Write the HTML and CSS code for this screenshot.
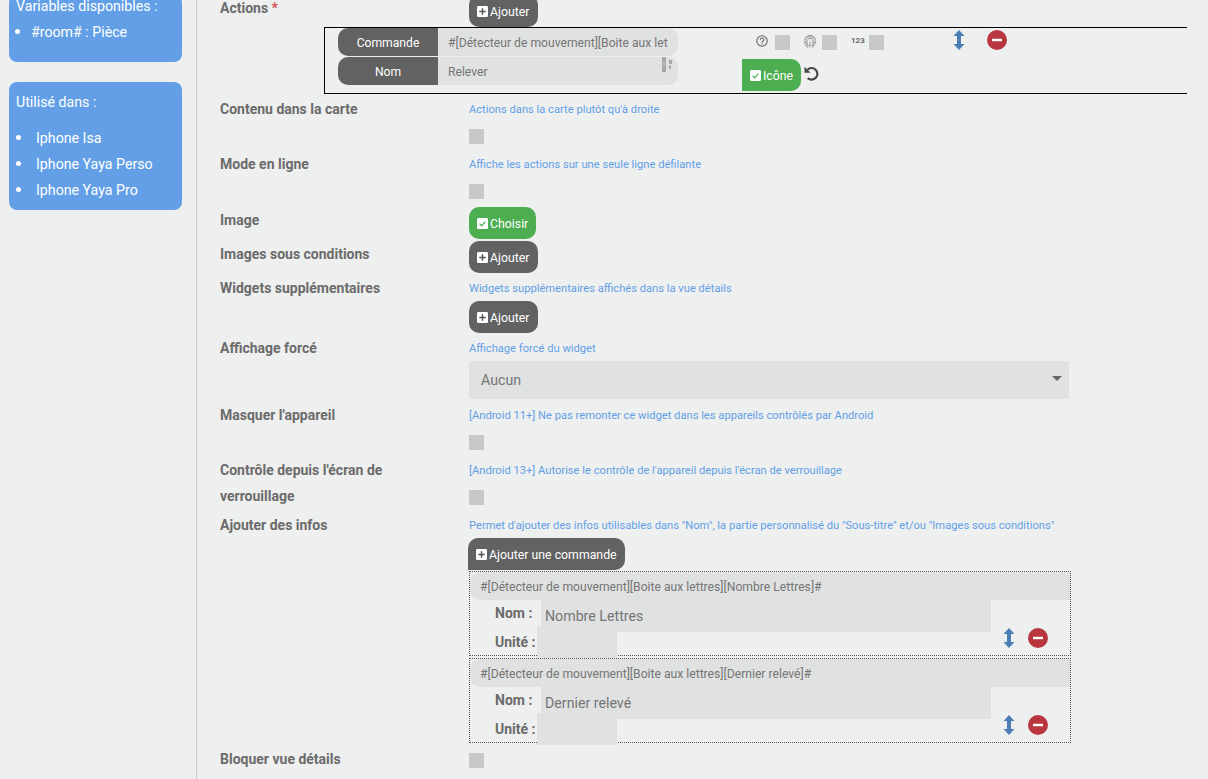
FILE: index.html
```html
<!DOCTYPE html>
<html>
<head>
    <meta charset="utf-8">
    <title>Widget</title>
    <link rel="stylesheet" href="styles.css">
</head>
<body>
<div class="page">
    <aside class="sidebar">
        <div class="side-box side-box-vars">
            <div class="side-title">Variables disponibles :</div>
            <ul class="side-list side-list-vars">
                <li>#room# : Pièce</li>
            </ul>
        </div>
        <div class="side-box side-box-used">
            <div class="side-title">Utilisé dans :</div>
            <ul class="side-list">
                <li>Iphone Isa</li>
                <li>Iphone Yaya Perso</li>
                <li>Iphone Yaya Pro</li>
            </ul>
        </div>
    </aside>

    <main class="content">
        <div class="row">
            <div class="label label-button">Actions <span class="required">*</span></div>
            <div><button class="btn btn-dark"><svg class="btn-icon" viewBox="0 0 12 12"><rect width="12" height="12" rx="1.5" fill="#fff"/><path d="M6 2.5v7M2.5 6h7" stroke="#555" stroke-width="1.6"/></svg>Ajouter</button></div>
        </div>

        <div class="action-box">
            <div class="action-fields">
                <div class="field">
                    <span class="field-name">Commande</span>
                    <span class="field-value">#[Détecteur de mouvement][Boite aux let</span>
                </div>
                <div class="field">
                    <span class="field-name">Nom</span>
                    <span class="field-value">Relever</span>
                    <svg class="field-mark" viewBox="0 0 11 15"><path d="M0 0h4v15H0z" fill="#a8a8a8"/><path d="M1.500 5h1v4h-1z" fill="#cfcfcf"/><path d="M7 3h3v4H7zM7 8.500h2V12H7z" fill="#a8a8a8"/></svg>
                </div>
            </div>
            <div class="action-side">
                <div class="action-options">
                    <svg class="opt-icon" viewBox="0 0 12 12"><circle cx="6" cy="6" r="5.200" fill="none" stroke="#666" stroke-width="1.100"/><path d="M4.300 4.700c0-2.200 3.500-2.200 3.500-.1 0 1.400-1.800 1.300-1.800 2.800" fill="none" stroke="#666" stroke-width="1.100"/><path d="M5.400 8.300h1.200v1.200H5.400z" fill="#666"/></svg>
                    <span class="checkbox opt-check"></span>
                    <svg class="opt-icon opt-finger" viewBox="0 0 12 13" fill="none" stroke="#949494" stroke-width="1"><path d="M1 4.500c0-5.500 10-5.500 10 0M.8 9V5.500c0-5 10.400-5 10.400 0V9M3 11V6c0-3.500 6-3.500 6 0v5M6 12.500V6.500M1 7l4 4M11 7l-4 4M1 10l3 2.500M11 10l-3 2.500"/></svg>
                    <span class="checkbox opt-check"></span>
                    <span class="opt-num">123</span>
                    <span class="checkbox opt-check"></span>
                    <svg class="move-icon move-top" viewBox="0 0 12 20"><path d="M6 0l5.500 6H8v8h3.500L6 20 .5 14H4V6H.5z" fill="#4d7db5"/></svg>
                    <svg class="minus-icon minus-top" viewBox="0 0 20 20"><circle cx="10" cy="10" r="10" fill="#b9363f"/><rect x="5" y="8.800" width="10" height="2.400" fill="#fff"/></svg>
                </div>
                <div class="action-icon-row">
                    <button class="btn btn-green btn-icone"><svg class="btn-icon" viewBox="0 0 12 12"><rect width="12" height="12" rx="1.500" fill="#fff"/><path d="M2.800 6.200l2.300 2.300 4-4.500" fill="none" stroke="#4cae50" stroke-width="1.300"/></svg>Icône</button>
                    <svg class="reset-icon" viewBox="0.500 0.500 15 15"><path d="M4 4.200A5.800 5.800 0 1 1 4.200 12.600" fill="none" stroke="#444" stroke-width="2.100"/><path d="M1 1.200v6h6z" fill="#444"/></svg>
                </div>
            </div>
        </div>

        <div class="row row-check">
            <div class="label">Contenu dans la carte</div>
            <div>
                <div class="help">Actions dans la carte plutôt qu'à droite</div>
                <span class="checkbox check-block"></span>
            </div>
        </div>

        <div class="row row-check row-tight">
            <div class="label">Mode en ligne</div>
            <div>
                <div class="help">Affiche les actions sur une seule ligne défilante</div>
                <span class="checkbox check-block"></span>
            </div>
        </div>

        <div class="row row-button">
            <div class="label label-button">Image</div>
            <div><button class="btn btn-green"><svg class="btn-icon" viewBox="0 0 12 12"><rect width="12" height="12" rx="1.500" fill="#fff"/><path d="M2.800 6.200l2.300 2.300 4-4.500" fill="none" stroke="#4cae50" stroke-width="1.300"/></svg>Choisir</button></div>
        </div>

        <div class="row row-stack">
            <div class="label label-button">Images sous conditions</div>
            <div><button class="btn btn-dark"><svg class="btn-icon" viewBox="0 0 12 12"><rect width="12" height="12" rx="1.500" fill="#fff"/><path d="M6 2.500v7M2.500 6h7" stroke="#555" stroke-width="1.600"/></svg>Ajouter</button></div>
        </div>

        <div class="row row-stack">
            <div class="label">Widgets supplémentaires</div>
            <div>
                <div class="help">Widgets supplémentaires affichés dans la vue détails</div>
                <button class="btn btn-dark btn-below"><svg class="btn-icon" viewBox="0 0 12 12"><rect width="12" height="12" rx="1.500" fill="#fff"/><path d="M6 2.500v7M2.500 6h7" stroke="#555" stroke-width="1.600"/></svg>Ajouter</button>
            </div>
        </div>

        <div class="row row-stack">
            <div class="label">Affichage forcé</div>
            <div>
                <div class="help">Affichage forcé du widget</div>
                <div class="select">Aucun</div>
            </div>
        </div>

        <div class="row row-check">
            <div class="label">Masquer l'appareil</div>
            <div>
                <div class="help">[Android 11+] Ne pas remonter ce widget dans les appareils contrôlés par Android</div>
                <span class="checkbox check-block"></span>
            </div>
        </div>

        <div class="row row-check">
            <div class="label">Contrôle depuis l'écran de verrouillage</div>
            <div>
                <div class="help">[Android 13+] Autorise le contrôle de l'appareil depuis l'écran de verrouillage</div>
                <span class="checkbox check-block"></span>
            </div>
        </div>

        <div class="row row-infos">
            <div class="label">Ajouter des infos</div>
            <div>
                <div class="help">Permet d'ajouter des infos utilisables dans "Nom", la partie personnalisé du "Sous-titre" et/ou "Images sous conditions"</div>
                <button class="btn btn-dark btn-below btn-command"><svg class="btn-icon" viewBox="0 0 12 12"><rect width="12" height="12" rx="1.500" fill="#fff"/><path d="M6 2.500v7M2.500 6h7" stroke="#555" stroke-width="1.600"/></svg>Ajouter une commande</button>

                <div class="info-block">
                    <div class="info-head">#[Détecteur de mouvement][Boite aux lettres][Nombre Lettres]#</div>
                    <div class="info-body">
                        <div class="info-fields">
                            <div class="info-row">
                                <span class="info-label info-label-name">Nom :</span>
                                <span class="info-input info-input-name">Nombre Lettres</span>
                            </div>
                            <div class="info-row info-row-unit">
                                <span class="info-label info-label-unit">Unité :</span>
                                <span class="info-input info-input-unit"></span>
                            </div>
                        </div>
                        <div class="info-actions">
                            <svg class="move-icon" viewBox="0 0 12 20"><path d="M6 0l5.500 6H8v8h3.500L6 20 .5 14H4V6H.5z" fill="#4d7db5"/></svg>
                            <svg class="minus-icon" viewBox="0 0 20 20"><circle cx="10" cy="10" r="10" fill="#b9363f"/><rect x="5" y="8.800" width="10" height="2.400" fill="#fff"/></svg>
                        </div>
                    </div>
                </div>

                <div class="info-block">
                    <div class="info-head">#[Détecteur de mouvement][Boite aux lettres][Dernier relevé]#</div>
                    <div class="info-body">
                        <div class="info-fields">
                            <div class="info-row">
                                <span class="info-label info-label-name">Nom :</span>
                                <span class="info-input info-input-name">Dernier relevé</span>
                            </div>
                            <div class="info-row info-row-unit">
                                <span class="info-label info-label-unit">Unité :</span>
                                <span class="info-input info-input-unit"></span>
                            </div>
                        </div>
                        <div class="info-actions">
                            <svg class="move-icon" viewBox="0 0 12 20"><path d="M6 0l5.500 6H8v8h3.500L6 20 .5 14H4V6H.5z" fill="#4d7db5"/></svg>
                            <svg class="minus-icon" viewBox="0 0 20 20"><circle cx="10" cy="10" r="10" fill="#b9363f"/><rect x="5" y="8.800" width="10" height="2.400" fill="#fff"/></svg>
                        </div>
                    </div>
                </div>
            </div>
        </div>

        <div class="row">
            <div class="label label-last">Bloquer vue détails</div>
            <div><span class="checkbox"></span></div>
        </div>
    </main>
</div>
</body>
</html>
```

FILE: styles.css
```css
* {
    box-sizing: border-box;
}

html, body {
    margin: 0;
    height: 779px;
    overflow: hidden;
}

body {
    background: #eeefef;
    font-family: Roboto, "Liberation Sans", sans-serif;
    font-size: 14px;
    color: #6b6b6b;
}

.page {
    display: flex;
    height: 784px;
    margin-top: -5px;
}

/* left column */
.sidebar {
    flex: 0 0 197px;
    border-right: 1px solid #ccc;
    padding-left: 9px;
}

.side-box {
    width: 173px;
    background: #629fe6;
    border-radius: 8px;
    color: #fff;
    padding: 0 7px;
    font-size: 14.2px;
}

.side-box-vars {
    height: 67px;
    margin-bottom: 20px;
    padding-top: 1px;
}

.side-box-used {
    height: 128px;
    padding-top: 10px;
}

.side-title {
    line-height: 20px;
}

.side-list {
    list-style: none;
    margin: 13px 0 0;
    padding-left: 20px;
}

.side-list li {
    position: relative;
    line-height: 26px;
}

.side-list li::before {
    content: "";
    position: absolute;
    left: -20px;
    top: 10px;
    width: 5px;
    height: 5px;
    border-radius: 50%;
    background: #fff;
}

.side-list-vars {
    margin-top: 3px;
    padding-left: 15px;
}

.side-list-vars li::before {
    left: -16px;
}

/* form */
.content {
    flex: 1;
    padding-left: 23px;
}

.row {
    display: grid;
    grid-template-columns: 249px 1fr;
}

.row-button {
    margin-bottom: 2px;
}

.row-check {
    margin-bottom: 10px;
}

.row-tight {
    margin-bottom: 8px;
}

.row-stack {
    margin-bottom: 5px;
}

.row-infos {
    margin-bottom: 10px;
}

.label {
    font-weight: 700;
    line-height: 26px;
    margin: -3px 30px -4px 0;
}

.label-button {
    margin-top: 0;
}

.label-last {
    margin-top: -7px;
}

.required {
    color: #d9534f;
}

.help {
    height: 20px;
    font-size: 11.17px;
    line-height: 22px;
    color: #629fe6;
    white-space: nowrap;
}

.btn {
    display: inline-flex;
    align-items: center;
    height: 32px;
    border: none;
    border-radius: 10px;
    padding: 2px 8px 0;
    font-family: inherit;
    font-size: 12.3px;
    font-weight: 400;
    color: #fff;
}

.btn-dark {
    min-width: 69px;
    background: #626262;
}

.btn-green {
    background: #4cae50;
}

.btn-icon {
    width: 11px;
    height: 11px;
    margin-top: -2px;
    margin-right: 2px;
}

.btn-below {
    display: flex;
    width: fit-content;
    margin-top: 3px;
}

.btn-command {
    margin-left: -1px;
    border-radius: 10px 10px 10px 0;
}

.checkbox {
    display: block;
    width: 15px;
    height: 15px;
    background: #c8c8c8;
}

.check-block {
    margin-top: 10px;
}

.select {
    position: relative;
    width: 600px;
    height: 38px;
    margin-top: 3px;
    margin-bottom: 1px;
    padding-left: 12px;
    line-height: 38px;
    background: #e0e1e1;
    font-size: 14.2px;
    color: #757575;
}

.select::after {
    content: "";
    position: absolute;
    right: 7px;
    top: 15px;
    border-left: 5px solid transparent;
    border-right: 5px solid transparent;
    border-top: 5px solid #666;
}

/* action box */
.action-box {
    display: flex;
    width: 863px;
    height: 67px;
    margin: 0 0 5px 104px;
    padding-left: 13px;
    border: 1px solid #000;
    border-right: none;
}

.action-fields {
    flex: 0 0 340px;
}

.field {
    position: relative;
    display: flex;
    height: 28px;
    margin-bottom: 1px;
    font-size: 12.15px;
}

.field-name {
    width: 100px;
    background: #626262;
    border-radius: 10px 0 0 10px;
    color: #fff;
    text-align: center;
    line-height: 30px;
}

.field-value {
    width: 240px;
    padding-left: 10px;
    background: #e0e1e1;
    border-radius: 0 10px 10px 0;
    line-height: 30px;
    color: #757575;
    white-space: nowrap;
    overflow: hidden;
}

.field-mark {
    position: absolute;
    left: 324px;
    top: 0;
    width: 11px;
    height: 15px;
}

.action-side {
    margin-left: 64px;
}

.action-options {
    display: flex;
    align-items: flex-start;
    height: 31px;
    padding: 2px 0 0 14px;
}

.opt-icon {
    width: 12px;
    height: 12px;
    margin-top: 5px;
    margin-right: 7px;
}

.opt-check {
    margin-top: 5px;
}

.opt-finger {
    height: 13px;
    margin-left: 14px;
    margin-right: 6px;
}

.opt-num {
    width: 18px;
    margin-left: 14px;
    font-size: 8px;
    font-weight: 700;
    line-height: 22px;
}

.move-icon {
    width: 12px;
    height: 20px;
}

.minus-icon {
    width: 20px;
    height: 20px;
}

.move-top {
    margin-left: 69px;
}

.minus-top {
    margin-left: 22px;
}

.action-icon-row {
    display: flex;
    align-items: center;
}

.btn-icone {
    border-radius: 0 10px 10px 0;
}

.reset-icon {
    width: 15px;
    height: 15px;
    margin-top: -3px;
    margin-left: 3px;
}

/* extra infos */
.info-block {
    width: 602px;
    height: 85px;
    margin-top: 1px;
    margin-bottom: 2px;
    border: 1px dotted #555;
}

.info-block:last-child {
    margin-bottom: 0;
}

.info-head {
    height: 28px;
    padding-left: 10px;
    background: #e0e1e1;
    border-radius: 10px 0 0 10px;
    font-size: 12.15px;
    line-height: 30px;
    color: #757575;
}

.info-body {
    display: flex;
}

.info-fields {
    width: 521px;
}

.info-row {
    display: flex;
}

.info-row-unit {
    margin-top: -6px;
    margin-bottom: -3px;
}

.info-label {
    padding-left: 25px;
    font-weight: 700;
    line-height: 26px;
}

.info-label-name {
    width: 71px;
}

.info-label-unit {
    width: 67px;
    margin-top: 3px;
}

.info-input {
    height: 32px;
    background: #e0e1e1;
    line-height: 32px;
    font-size: 14.2px;
    color: #757575;
}

.info-input-name {
    width: 450px;
    padding: 0 4px;
    line-height: 32px;
}

.info-input-unit {
    width: 80px;
}

.info-actions {
    display: flex;
    align-items: flex-end;
    gap: 13px;
    margin-left: 12px;
    padding-bottom: 7px;
    height: 55px;
}
```
